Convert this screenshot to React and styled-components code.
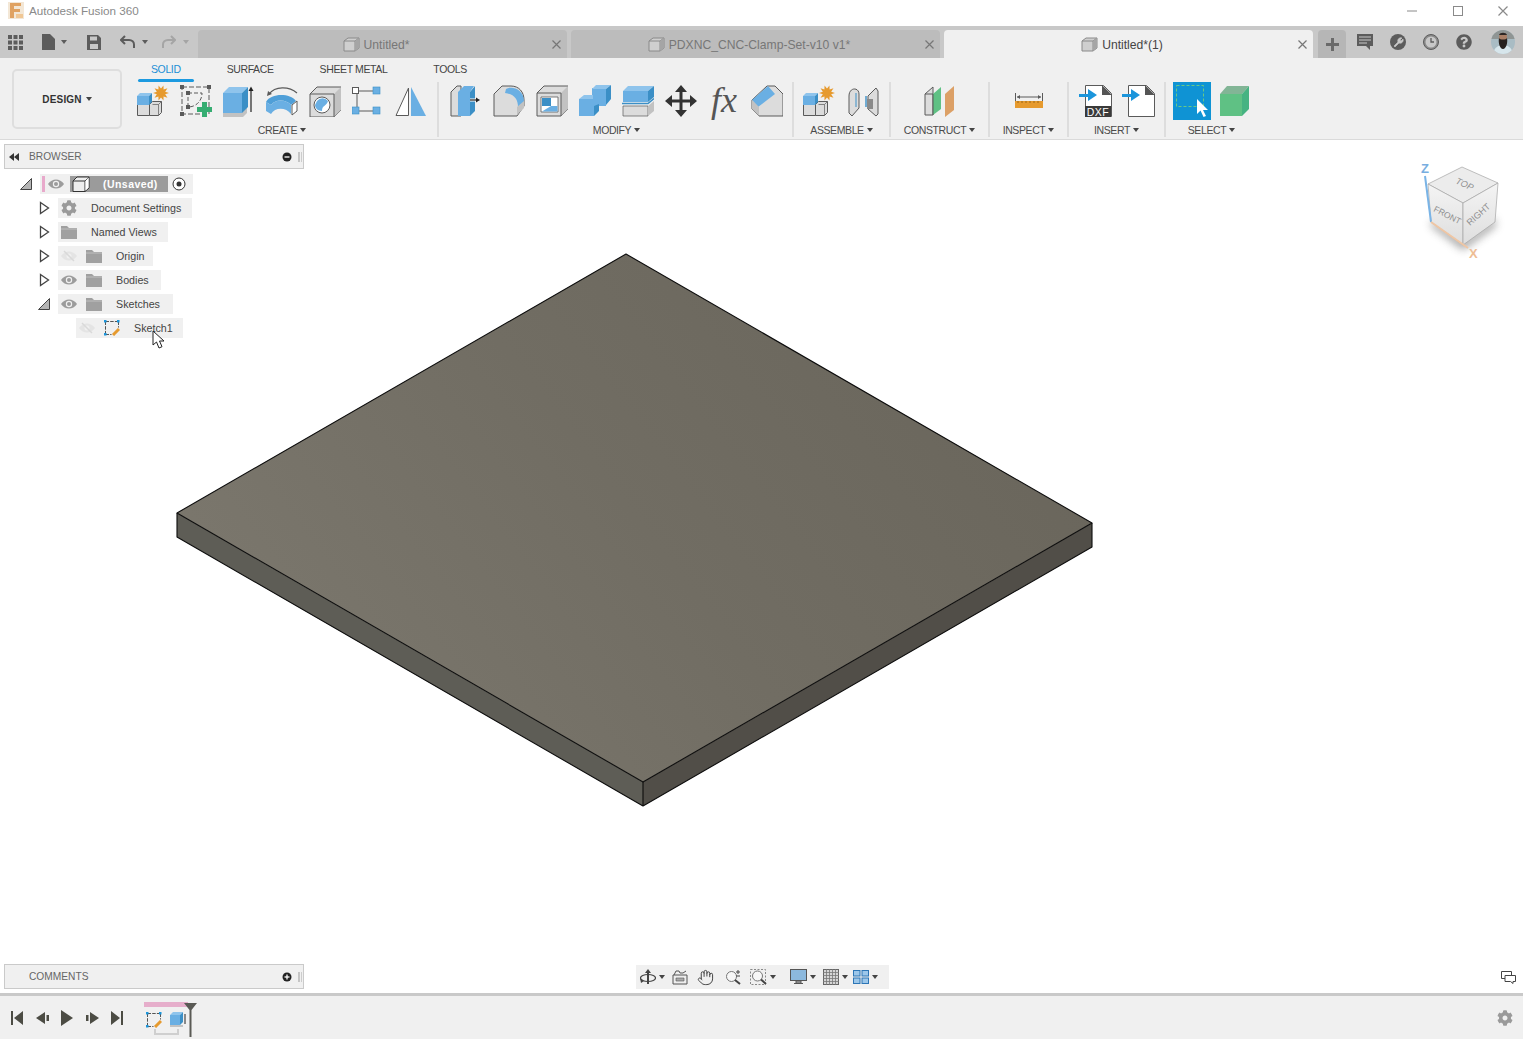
import React from "react";
import styled, { createGlobalStyle } from "styled-components";
import { FaCog, FaQuestionCircle } from "react-icons/fa";
import { Hand } from "lucide-react";

const GlobalStyle = createGlobalStyle`
    html, body { margin: 0; padding: 0; height: 100%; background: #fff; overflow: hidden; }
    body { font-family: "Liberation Sans", Arial, sans-serif; }
    #root { height: 100%; }
    svg { display: block; flex-shrink: 0; }
`;

const BLUE = "#6aafe3";
const DEEP = "#3b8fc6";
const PALE = "#dcdcdc";
const MID = "#c2c2c2";
const LINE = "#5a5a5a";
const ORANGE = "#e69a2e";
const GREEN = "#5fc184";

const Page = styled.div`
    height: 1039px;
    width: 1523px;
    display: flex;
    flex-direction: column;
`;

/* title bar */
const TitleBar = styled.div`
    height: 26px;
    display: flex;
    align-items: center;
    padding: 0 15px 5px 8px;
    background: #fff;
    color: #8a8a8a;
    font-size: 11.7px;
    box-sizing: border-box;
`;
const TitleText = styled.span`
    margin-left: 5px;
    flex: 1;
`;
const WinButton = styled.div`
    width: 10px;
    height: 20px;
    margin-left: 35.5px;
    display: flex;
    align-items: center;
    justify-content: center;
`;

/* document bar */
const DocBar = styled.div`
    height: 32px;
    background: #c8c8c8;
    display: flex;
    align-items: flex-end;
`;
const QuickTools = styled.div`
    width: 198px;
    height: 32px;
    display: flex;
    align-items: center;
    padding-left: 8px;
    box-sizing: border-box;
`;
const QuickGap = styled.div`
    width: 19px;
`;
const Tab = styled.div`
    width: 369px;
    height: 28px;
    margin-right: 4px;
    padding: 1px 13px 0 0;
    box-sizing: border-box;
    border-radius: 4px 4px 0 0;
    background: ${(p) => (p.$active ? "#f0f0f0" : "#bcbcbc")};
    color: ${(p) => (p.$active ? "#444" : "#777")};
    font-size: 12.15px;
    display: flex;
    align-items: center;
    justify-content: center;
    gap: 4px;
    position: relative;
`;
const TabClose = styled.div`
    position: absolute;
    right: 6px;
    top: 10px;
`;
const AddTab = styled.div`
    width: 28px;
    height: 28px;
    margin-left: 1px;
    background: #b6b6b6;
    border-radius: 4px 4px 0 0;
    display: flex;
    align-items: center;
    justify-content: center;
`;
const RightTools = styled.div`
    height: 32px;
    display: flex;
    align-items: center;
    gap: 17px;
    margin-left: 11px;
`;
const Avatar = styled.div`
    margin-left: 2px;
`;

/* ribbon */
const Ribbon = styled.div`
    height: 82px;
    background: #f0f0f0;
    border-bottom: 1px solid #dadada;
    box-sizing: border-box;
    display: flex;
    align-items: flex-start;
    padding-left: 12px;
`;
const DesignButton = styled.div`
    width: 110px;
    height: 60px;
    margin-top: 11px;
    margin-right: 15px;
    box-sizing: border-box;
    border: 2px solid #dedede;
    border-radius: 5px;
    display: flex;
    align-items: center;
    justify-content: center;
    gap: 4px;
    font-size: 10px;
    font-weight: bold;
    color: #333;
    letter-spacing: 0.2px;
`;
const RibbonBody = styled.div`
    display: flex;
    flex-direction: column;
`;
const TabRow = styled.div`
    height: 24px;
    display: flex;
    margin-left: -9px;
`;
const RibbonTab = styled.div`
    padding: 0 23px;
    height: 24px;
    line-height: 22px;
    font-size: 10.5px;
    letter-spacing: -0.38px;
    color: ${(p) => (p.$active ? "#1c8fd6" : "#444")};
    position: relative;
    &::after {
        content: "";
        display: ${(p) => (p.$active ? "block" : "none")};
        position: absolute;
        left: 10px;
        right: 10px;
        bottom: 0;
        height: 3px;
        border-radius: 2px;
        background: #1c9ae0;
    }
`;
const Groups = styled.div`
    display: flex;
    height: 55px;
`;
const Group = styled.div`
    display: flex;
    flex-direction: column;
    align-items: center;
    box-sizing: border-box;
    width: ${(p) => (p.$w ? `${p.$w}px` : "auto")};
    padding: 0 ${(p) => p.$right ?? 0}px 0 ${(p) => p.$left ?? 0}px;
    border-right: ${(p) => (p.$last ? "none" : "2px solid #dddddd")};
`;
const ToolRow = styled.div`
    height: 38px;
    display: flex;
    align-items: center;
    gap: ${(p) => p.$gap ?? 11}px;
`;
const GroupLabel = styled.div`
    margin-top: 4px;
    font-size: 10.5px;
    letter-spacing: -0.4px;
    color: #4a4a4a;
    white-space: nowrap;
    display: flex;
    align-items: center;
    gap: 3px;
`;
const Caret = styled.span`
    display: inline-block;
    width: 0;
    height: 0;
    margin-left: ${(p) => p.$gap ?? 0}px;
    margin-right: ${(p) => p.$after ?? 0}px;
    border-left: 3px solid transparent;
    border-right: 3px solid transparent;
    border-top: 4px solid ${(p) => p.$color ?? "#444"};
`;
const FxGlyph = styled.span`
    display: block;
    width: 32px;
    height: 32px;
    line-height: 30px;
    text-align: center;
    font-family: "Liberation Serif", serif;
    font-style: italic;
    font-size: 36px;
    color: #555;
`;

/* viewport */
const Viewport = styled.div`
    flex: 1;
    position: relative;
    background: #fff;
    overflow: hidden;
`;
const Canvas = styled.svg`
    position: absolute;
    inset: 0;
`;
const Cube = styled.svg`
    position: absolute;
    right: 8px;
    top: 18px;
`;
const PanelHead = styled.div`
    width: 300px;
    height: 25px;
    box-sizing: border-box;
    border: 1px solid #cacaca;
    background: #f0f0f0;
    display: flex;
    align-items: center;
    font-size: 10.2px;
    color: #666;
    padding: 0 0 0 ${(p) => p.$pad ?? 4}px;
`;
const HeadTitle = styled.span`
    flex: 1;
    margin-left: ${(p) => p.$gap ?? 0}px;
`;
const HeadGap = styled.div`
    width: 6px;
`;
const Browser = styled.div`
    position: absolute;
    left: 4px;
    top: 4px;
`;
const Comments = styled.div`
    position: absolute;
    left: 4px;
    bottom: 4px;
`;
const Tree = styled.div`
    margin-top: 3px;
    display: flex;
    flex-direction: column;
`;
const Row = styled.div`
    height: 24px;
    display: flex;
    align-items: center;
    padding-left: ${(p) => p.$indent}px;
`;
const Toggle = styled.div`
    width: 18px;
    margin-right: 5px;
    display: flex;
    align-items: center;
    justify-content: center;
`;
const Chip = styled.div`
    height: 20px;
    background: #f0f0f0;
    display: flex;
    align-items: center;
    padding: 0 ${(p) => p.$pr ?? 11}px 0 3px;
    font-size: 10.7px;
    color: #444;
    gap: 9px;
    position: relative;
    white-space: nowrap;
`;
const RootChip = styled(Chip)`
    margin-left: 8px;
    padding: 0 7px 0 2px;
    gap: 0;
`;
const Label = styled.span`
    margin-left: 5px;
`;
const RootBox = styled.div`
    width: 98px;
    height: 16px;
    margin: 0 4px 0 6px;
    background: #9b9b9b;
    color: #fff;
    font-weight: bold;
    font-size: 10.5px;
    letter-spacing: 0.45px;
    display: flex;
    align-items: center;
    gap: 13px;
    padding-left: 2px;
    box-sizing: border-box;
`;
const PinkBar = styled.div`
    width: 3px;
    height: 16px;
    background: #e8a9cb;
    margin-right: 3px;
`;
const Pointer = styled.svg`
    position: absolute;
    left: 76px;
    top: 12px;
`;
const NavBar = styled.div`
    position: absolute;
    left: 636px;
    bottom: 4px;
    width: 253px;
    height: 24px;
    background: #f0f0f0;
    display: flex;
    align-items: center;
    padding-left: 4px;
    box-sizing: border-box;
`;
const NavItem = styled.div`
    display: flex;
    align-items: center;
    gap: 3px;
    margin-right: ${(p) => p.$gap ?? 7}px;
`;
const ChatIcon = styled.div`
    position: absolute;
    right: 7px;
    bottom: 9px;
`;

/* timeline */
const Timeline = styled.div`
    height: 46px;
    box-sizing: border-box;
    border-top: 3px solid #c9c9c9;
    background: #f0f0f0;
    display: flex;
    align-items: center;
    padding: 0 10px 0 11px;
`;
const Transport = styled.div`
    display: flex;
    align-items: center;
    gap: 12.5px;
`;
const Features = styled.div`
    margin-left: 21px;
    width: 54px;
    height: 43px;
    position: relative;
    display: flex;
    align-items: center;
    gap: 8px;
    padding: 4px 0 0 2px;
    box-sizing: border-box;
    align-self: flex-start;
    &::before {
        content: "";
        position: absolute;
        left: 0;
        top: 6px;
        width: 44px;
        height: 5px;
        background: #e6aecb;
    }
`;
const Marker = styled.svg`
    position: absolute;
    left: 40px;
    top: 7px;
`;
const Bracket = styled.div`
    position: absolute;
    left: 10px;
    top: 33px;
    width: 25px;
    height: 6px;
    box-sizing: border-box;
    border: 2px solid #cfcfcf;
    border-top: none;
`;
const Spacer = styled.div`
    flex: 1;
`;

/* generic drawing wrapper */
const Ico = ({ w = 32, h = 32, children }) => (
    <svg width={w} height={h} viewBox={`0 0 ${w} ${h}`}>{children}</svg>
);

const Star = ({ x, y, r = 8 }) => {
    const pts = [];
    for (let i = 0; i < 20; i++) {
        const a = (i * Math.PI) / 10;
        const q = i % 2 ? r * 0.55 : r;
        pts.push(`${x + q * Math.cos(a)},${y + q * Math.sin(a)}`);
    }
    return <polygon points={pts.join(" ")} fill={ORANGE} />;
};

const NewComponent = () => (
    <Ico>
        <path d="M.5 19.500h12v11H.5z" fill={PALE} stroke={LINE} />
        <path d="M12.500 19.500l3-3h9v11l-3 3h-9z" fill={PALE} stroke={LINE} />
        <path d="M15.500 19.500h6v11M21.500 19.500l3-3" fill="none" stroke={LINE} strokeWidth=".7" />
        <path d="M0 11h12v9H0z" fill={BLUE} />
        <path d="M0 11l3-3h12l-3 3z" fill="#8fc4ec" />
        <path d="M12 11l3-3v9l-3 3z" fill={DEEP} />
        <Star x={24} y={8} />
    </Ico>
);
const NewSketch = () => (
    <Ico>
        <path d="M2 2h27v27H2z" fill="none" stroke={LINE} strokeDasharray="5 2" />
        <path d="M8 8h14c0 8-6 14-14 14z" fill="none" stroke={LINE} strokeDasharray="4 2" />
        <rect x="0" y="0" width="4" height="4" fill={LINE} />
        <rect x="27" y="0" width="4" height="4" fill={LINE} />
        <rect x="0" y="27" width="4" height="4" fill={LINE} />
        <rect x="6" y="6" width="4" height="4" fill={LINE} />
        <rect x="6" y="20" width="4" height="4" fill={LINE} />
        <path d="M22 18h5v5h5v5h-5v5h-5v-5h-5v-5h5z" fill="#36ad72" transform="translate(0 -1)" />
    </Ico>
);
const Extrude = () => (
    <Ico>
        <path d="M0 27l4-4h20v5l-4 4H0z" fill={MID} />
        <path d="M0 8h19v20H0z" fill={BLUE} />
        <path d="M0 8l6-6h19l-6 6z" fill="#8fc4ec" />
        <path d="M19 8l6-6v20l-6 6z" fill={DEEP} />
        <path d="M28 27V4" stroke="#222" strokeWidth="1.2" />
        <path d="M25.500 6L28 1.500 30.500 6z" fill="#222" />
    </Ico>
);
const Sweep = () => (
    <Ico>
        <path d="M3 9C9 1 23 1 31 8" fill="none" stroke={LINE} strokeWidth="1.2" />
        <path d="M1 11l1-5 4 3z" fill={LINE} />
        <path d="M0 17C5 8 24 8 30 16l-5 4C20 14 9 14 5 20z" fill="#4f9fd8" />
        <path d="M0 17l5 3C9 14 20 14 25 20v9C20 22 9 22 5 29l-5-3z" fill={BLUE} />
        <path d="M26 20l5-4v10l-5 4z" fill="#fff" stroke={LINE} />
    </Ico>
);
const Hole = () => (
    <Ico>
        <path d="M1 9l7-7h24v23l-7 7H1z" fill={PALE} stroke={LINE} />
        <path d="M25 32V9l7-7v23z" fill={MID} />
        <path d="M1 9h24v23" fill="none" stroke={LINE} />
        <circle cx="13" cy="20" r="8" fill="#fff" stroke={LINE} />
        <path d="M8 16a7 7 0 0 1 11 0c-1 5-6 4-6 10-4 0-7-3-7-6z" fill={BLUE} />
    </Ico>
);
const Pattern = () => (
    <Ico>
        <path d="M5 6h18M5 6v20M5 26h18" stroke={LINE} fill="none" />
        <rect x=".5" y="2.500" width="6" height="6" fill="#fff" stroke={LINE} />
        <rect x="21" y="2" width="7" height="7" fill={BLUE} stroke={DEEP} strokeWidth=".6" />
        <rect x="0" y="22" width="7" height="7" fill={BLUE} stroke={DEEP} strokeWidth=".6" />
        <rect x="21" y="22" width="7" height="7" fill={BLUE} stroke={DEEP} strokeWidth=".6" />
    </Ico>
);
const Mirror = () => (
    <Ico>
        <path d="M13.500 3L1 30.500h12.500z" fill="#fff" stroke={LINE} />
        <path d="M16 2l15 29H16z" fill={BLUE} />
    </Ico>
);
const PressPull = () => (
    <Ico>
        <path d="M1 31V7l6-6h4v30z" fill={PALE} stroke={LINE} />
        <path d="M8 7h12v24H8z" fill={BLUE} />
        <path d="M8 7l6-6h10l-4 6z" fill={BLUE} />
        <path d="M20 7l5-6v25l-5 5z" fill={DEEP} />
        <path d="M20 15h9" stroke="#fff" strokeWidth="3" />
        <path d="M20 15h8" stroke="#222" strokeWidth="1.2" />
        <path d="M26 12.500l4 2.500-4 2.500z" fill="#222" />
    </Ico>
);
const Fillet = () => (
    <Ico>
        <path d="M1 31V9l8-8h9c8 0 13 6 13 14v6l-7 10z" fill={PALE} stroke={LINE} />
        <path d="M13 4c5-3 18-1 18 13l-6 5C25 14 21 9 12 8z" fill={BLUE} />
        <path d="M24 22l7-6v7l-7 7z" fill={MID} />
    </Ico>
);
const Shell = () => (
    <Ico>
        <path d="M1 8l7-7h24v23l-7 7H1z" fill={PALE} stroke={LINE} />
        <path d="M25 31V8l7-7v23z" fill={MID} />
        <path d="M1 8h24v23" fill="none" stroke={LINE} />
        <path d="M5 12h17v15H5z" fill="#fff" stroke={LINE} strokeWidth=".8" />
        <path d="M6 13h9v8H6z" fill={DEEP} />
        <path d="M6 26.500l9-5.500h6.500v5.500z" fill={BLUE} />
    </Ico>
);
const Combine = () => (
    <Ico>
        <path d="M0 14h13V3h14v18H15v10H0z" fill={BLUE} />
        <path d="M13 4l4-4h15l-5 4zM0 14l5-4h9v4z" fill="#8fc4ec" />
        <path d="M27 4l5-4v14l-5 6zM15 21l5-2v7l-5 5z" fill={DEEP} />
    </Ico>
);
const Split = () => (
    <Ico>
        <path d="M1 6h25v11H1z" fill={BLUE} />
        <path d="M1 6l5-5h26l-6 5z" fill="#8fc4ec" />
        <path d="M26 6l6-5v11l-6 5z" fill={DEEP} />
        <path d="M0 18.500h26l6-5" stroke={DEEP} strokeWidth="1.6" fill="none" />
        <path d="M1 21h25v10H1z" fill={PALE} stroke={LINE} strokeWidth=".7" />
        <path d="M26 21l6-5v10l-6 5z" fill={MID} />
    </Ico>
);
const MoveIcon = () => (
    <Ico>
        <path d="M16 0l6 7h-4.500v7.500H25V10l7 6-7 6v-4.500h-7.500V25H22l-6 7-6-7h4.500v-7.500H7V22l-7-6 7-6v4.500h7.500V7H10z" fill="#333" />
    </Ico>
);
const Fx = () => <FxGlyph>fx</FxGlyph>;
const Chamfer = () => (
    <Ico>
        <path d="M1 15L16 1h8l8 8v22H8l-7-7z" fill={PALE} stroke={LINE} />
        <path d="M1 15L17 1l7 8L7 22z" fill={BLUE} />
        <path d="M8 31l-7-7V15l7 7z" fill={MID} />
    </Ico>
);
const Joint = () => (
    <Ico>
        <path d="M1 11C1 2 11 2 11 9v14L4 31l-3-3z" fill={PALE} stroke={LINE} />
        <path d="M20 11l8-8 2 3v23l-2 2-8-7z" fill={PALE} stroke={LINE} />
        <path d="M8 8v14" stroke={DEEP} strokeWidth="1" />
        <path d="M18 11v11" stroke={DEEP} strokeWidth="1.400" />
        <path d="M19 14h6v10h-6z" fill="#8a8a8a" />
    </Ico>
);
const Plane = () => (
    <Ico>
        <path d="M1 9l8-7v28H1z" fill={PALE} stroke={LINE} />
        <path d="M9 9l8-7v22l-8 6z" fill={GREEN} />
        <path d="M1 9h8V30" fill="none" stroke={LINE} />
        <path d="M21 9l9-8v24l-9 7z" fill="#dca066" />
    </Ico>
);
const Measure = () => (
    <Ico w={28}>
        <path d="M.5 8v8M27.500 8v8" stroke={LINE} />
        <path d="M2 12h24" stroke={LINE} />
        <path d="M5 10l-3 2 3 2zM23 10l3 2-3 2z" fill={LINE} />
        <rect x="0" y="16" width="28" height="7" fill={ORANGE} />
        <path d="M3 16v2M7 16v2M11 16v2M15 16v2M19 16v2M23 16v2" stroke="#8a5a10" strokeWidth=".8" />
    </Ico>
);
const DocShape = ({ x = 6 }) => (
    <g transform={`translate(${x} 0)`}>
        <path d="M.5.5h18l8 8v23H.5z" fill="#fff" stroke={LINE} />
        <path d="M17 0l10 10H17z" fill="#555" />
    </g>
);
const ArrowIn = () => <path d="M0 9h9V4l9 6-9 6v-4H0z" fill="#1b95db" />;
const InsertDxf = () => (
    <Ico w={33}>
        <DocShape />
        <ArrowIn />
        <rect x="6" y="21" width="26" height="11" fill="#3a3a3a" />
        <text x="19" y="30.500" textAnchor="middle" fontFamily="'Liberation Sans', sans-serif" fontSize="10.500" fill="#fff" letterSpacing=".5">DXF</text>
    </Ico>
);
const InsertPlain = () => (
    <Ico w={33}>
        <DocShape />
        <ArrowIn />
    </Ico>
);
const SelectBox = () => (
    <Ico w={38} h={38}>
        <rect width="38" height="38" fill="#0f93d4" />
        <rect x="3.500" y="3.500" width="27" height="21" fill="none" stroke="#69c884" strokeDasharray="3 2" />
        <path d="M24 17v15l3.500-3.500 3 6.500 2.500-1-3-6h5z" fill="#fff" />
    </Ico>
);
const GreenBox = () => (
    <Ico w={30}>
        <path d="M0 9h22v22H0z" fill={GREEN} />
        <path d="M0 9l7-8h22l-7 8z" fill="#82b596" />
        <path d="M22 9l7-8v23l-7 7z" fill="#46b382" />
    </Ico>
);

const Eye = ({ off }) => (
    <Ico w={16} h={12}>
        {off ? (
            <g opacity=".55">
                <path d="M0 6c4-6 12-6 16 0-4 6-12 6-16 0z" fill="#dcdcdc" />
                <circle cx="8" cy="6" r="2.500" fill="#f0f0f0" />
                <path d="M3 1l10 10" stroke="#c8c8c8" strokeWidth="1.500" />
            </g>
        ) : (
            <g>
                <path d="M0 6c4-6 12-6 16 0-4 6-12 6-16 0z" fill="#9c9c9c" />
                <circle cx="8" cy="6" r="3.200" fill="#f0f0f0" />
                <circle cx="8" cy="6" r="2" fill="#9c9c9c" />
            </g>
        )}
    </Ico>
);
const Folder = () => (
    <Ico w={16} h={13}>
        <path d="M0 0h6l2 2h8v11H0z" fill="#a0a0a0" />
        <path d="M0 3h16" stroke="#c8c8c8" strokeWidth=".8" />
    </Ico>
);
const SketchGlyph = () => (
    <Ico w={16} h={16}>
        <path d="M1.500 1.500h13M1.500 1.500v13M14.500 1.500v6M1.500 14.500h6" fill="none" stroke="#555" strokeDasharray="3.500 1.200" />
        <rect x="0" y="0" width="2.500" height="2.500" fill="#1b95db" />
        <rect x="13" y="0" width="2.500" height="2.500" fill="#1b95db" />
        <rect x="0" y="13" width="2.500" height="2.500" fill="#1b95db" />
        <path d="M9 15l6-6" stroke={ORANGE} strokeWidth="3" />
    </Ico>
);
const TriOpen = () => (
    <Ico w={11} h={14}>
        <path d="M1.500 1.500l8 5.500-8 5.500z" fill="#fff" stroke="#444" strokeWidth="1.300" />
    </Ico>
);
const TriDown = () => (
    <Ico w={12} h={12}>
        <path d="M.5 11.500L11.500.5v11z" fill="#b5b5b5" stroke="#444" />
    </Ico>
);
const SmallCube = () => (
    <Ico w={17} h={15}>
        <path d="M1 4l4-3h11v10l-4 3H1z" fill="#cfcfcf" stroke="#8a8a8a" />
        <path d="M1 4h11v10M12 4l4-3" fill="none" stroke="#8a8a8a" />
        <path d="M12 4l4-3v10l-4 3z" fill="#a5a5a5" />
    </Ico>
);
const RootCube = () => (
    <Ico w={18} h={16}>
        <path d="M1 5l4-4h12v11l-4 3.500H1z" fill="#eeeeee" stroke="#333" />
        <path d="M1 5h12v10.500M13 5l4-4" fill="none" stroke="#333" />
        <path d="M13.500 5l3-3.500v10l-3 3z" fill="#fff" />
    </Ico>
);
const CircleBtn = ({ plus }) => (
    <Ico w={10} h={10}>
        <circle cx="5" cy="5" r="4.500" fill="#222" />
        <path d="M2.500 5h5" stroke="#fff" strokeWidth="1.300" />
        {plus && <path d="M5 2.500v5" stroke="#fff" strokeWidth="1.300" />}
    </Ico>
);
const PanelPin = () => (
    <Ico w={5} h={12}>
        <path d="M1 1v10" stroke="#999" />
        <path d="M3.500 1v10" stroke="#ccc" />
    </Ico>
);
const XMark = ({ color = "#777", s = 9 }) => (
    <Ico w={s} h={s}>
        <path d={`M.5.5L${s - 0.5} ${s - 0.5}M${s - 0.5} .5L.5 ${s - 0.5}`} stroke={color} strokeWidth="1.200" />
    </Ico>
);

const tools = {
    create: [NewComponent, NewSketch, Extrude, Sweep, Hole, Pattern, Mirror],
    modify: [PressPull, Fillet, Shell, Combine, Split, MoveIcon, Fx, Chamfer],
    assemble: [NewComponent, Joint],
};

const treeRows = [
    { name: "Document Settings", icons: "gear", open: false, pr: 11 },
    { name: "Named Views", icons: "folder", open: false, pr: 11 },
    { name: "Origin", icons: "off", open: false, pr: 8 },
    { name: "Bodies", icons: "on", open: false, pr: 12 },
    { name: "Sketches", icons: "on", open: true, pr: 13 },
];

const RowIcons = ({ kind }) => {
    if (kind === "gear") return <FaCog size={16} color="#9a9a9a" />;
    if (kind === "folder") return <Folder />;
    return (
        <>
            <Eye off={kind === "off"} />
            <Folder />
        </>
    );
};

const ViewCube = () => (
    <Cube width="100" height="110" viewBox="1415 158 100 110">
        <defs>
            <filter id="cubeShadow" x="-30%" y="-30%" width="160%" height="160%">
                <feGaussianBlur stdDeviation="4" />
            </filter>
            <linearGradient id="cubeFront" x1="0" y1="0" x2="0" y2="1">
                <stop offset="0" stopColor="#f4f4f4" />
                <stop offset="1" stopColor="#dedede" />
            </linearGradient>
        </defs>
        <path d="M1431 226l32 24 33-24-1-8-31 22-32-20z" fill="#666" opacity=".6" filter="url(#cubeShadow)" />
        <path d="M1462 167l36 16-35 20-35-19z" fill="#ececec" stroke="#a5a5a5" strokeWidth=".7" />
        <path d="M1428 184l35 19v42l-32-23z" fill="url(#cubeFront)" stroke="#a5a5a5" strokeWidth=".7" />
        <path d="M1463 203l35-20-3 39-32 23z" fill="url(#cubeFront)" stroke="#a5a5a5" strokeWidth=".7" />
        <text transform="translate(1455 183) rotate(25)" fontFamily="'Liberation Sans', sans-serif" fontStyle="italic" fontSize="9" fill="#8f8f8f">TOP</text>
        <text transform="translate(1433 211) rotate(27)" fontFamily="'Liberation Sans', sans-serif" fontSize="8.500" fill="#8f8f8f">FRONT</text>
        <text transform="translate(1470 226) rotate(-42)" fontFamily="'Liberation Sans', sans-serif" fontSize="9" fill="#8f8f8f">RIGHT</text>
        <path d="M1425 176l6 46" stroke="#7ab4e6" strokeWidth="2" />
        <path d="M1431 222l37 26" stroke="#efc6a4" strokeWidth="2" />
        <text x="1421" y="173" fontFamily="'Liberation Sans', sans-serif" fontWeight="bold" fontSize="13" fill="#78aee0">Z</text>
        <text x="1469" y="258" fontFamily="'Liberation Sans', sans-serif" fontWeight="bold" fontSize="13" fill="#eebd94">X</text>
    </Cube>
);

const Model = () => (
    <Canvas width="1523" height="853" viewBox="0 140 1523 853">
        <defs>
            <linearGradient id="plateTop" x1="0.05" y1="0.7" x2="0.95" y2="0.3">
                <stop offset="0" stopColor="#7b776d" />
                <stop offset="0.5" stopColor="#716d63" />
                <stop offset="1" stopColor="#6a665c" />
            </linearGradient>
        </defs>
        <polygon points="177,513 643,782 643,806 177,537" fill="#5e5d56" />
        <polygon points="643,782 1092,523 1092,547 643,806" fill="#514e48" />
        <polygon points="626,254 1092,523 643,782 177,513" fill="url(#plateTop)" />
        <g fill="none" stroke="#0c0c0c" strokeWidth="1.100" strokeLinejoin="round">
            <polygon points="626,254 1092,523 643,782 177,513" />
            <polyline points="177,513 177,537 643,806 1092,547 1092,523" />
            <line x1="643" y1="782" x2="643" y2="806" />
        </g>
    </Canvas>
);

const App = () => {
    return (
        <Page>
            <GlobalStyle />
            <TitleBar>
                <Ico w={16} h={17}>
                    <rect width="16" height="17" fill="#f3e7d6" />
                    <path d="M2 1h11v3H6v3h6v3H6v6H2z" fill="#e0a262" />
                    <path d="M8 12h7v4H8z" fill="#f0c795" />
                </Ico>
                <TitleText>Autodesk Fusion 360</TitleText>
                <WinButton>
                    <Ico w={10} h={2}><path d="M0 1h10" stroke="#8a8a8a" /></Ico>
                </WinButton>
                <WinButton>
                    <Ico w={10} h={10}><rect x=".5" y=".5" width="9" height="9" fill="none" stroke="#8a8a8a" /></Ico>
                </WinButton>
                <WinButton>
                    <XMark color="#8a8a8a" s={10} />
                </WinButton>
            </TitleBar>

            <DocBar>
                <QuickTools>
                    <Ico w={15} h={15}>
                        <path d="M0 0h4v4H0zM5.500 0h4v4h-4zM11 0h4v4h-4zM0 5.500h4v4H0zM5.500 5.500h4v4h-4zM11 5.500h4v4h-4zM0 11h4v4H0zM5.500 11h4v4h-4zM11 11h4v4h-4z" fill="#5c5c5c" />
                    </Ico>
                    <QuickGap />
                    <Ico w={13} h={16}>
                        <path d="M0 0h8l5 5v11H0z" fill="#5c5c5c" />
                    </Ico>
                    <Caret $gap={6} $after={20} $color="#5c5c5c" />
                    <Ico w={14} h={15}>
                        <path d="M0 0h11l3 3v12H0z" fill="#5c5c5c" />
                        <path d="M3 1.500h7v4H3zM3 9h8v5H3z" fill="#c8c8c8" />
                    </Ico>
                    <QuickGap />
                    <Ico w={15} h={14}>
                        <path d="M5 1L1 5l4 4M1 5h8c3 0 5 2 5 4.500V13" fill="none" stroke="#5c5c5c" strokeWidth="2" />
                    </Ico>
                    <Caret $gap={7} $after={14} $color="#5c5c5c" />
                    <Ico w={14} h={14}>
                        <path d="M9 1l4 4-4 4M13 5H6C3 5 1 7 1 9.500V13" fill="none" stroke="#a5a5a5" strokeWidth="2" />
                    </Ico>
                    <Caret $gap={7} $color="#a5a5a5" />
                </QuickTools>
                <Tab>
                    <SmallCube />
                    Untitled*
                    <TabClose><XMark /></TabClose>
                </Tab>
                <Tab>
                    <SmallCube />
                    PDXNC_CNC-Clamp-Set-v10 v1*
                    <TabClose><XMark /></TabClose>
                </Tab>
                <Tab $active>
                    <SmallCube />
                    Untitled*(1)
                    <TabClose><XMark /></TabClose>
                </Tab>
                <AddTab>
                    <Ico w={13} h={13}><path d="M6.500 0v13M0 6.500h13" stroke="#6a6a6a" strokeWidth="3" /></Ico>
                </AddTab>
                <RightTools>
                    <Ico w={16} h={16}>
                        <path d="M0 0h16v12h-3v4l-4-4H0z" fill="#5c5c5c" />
                        <path d="M2 3h12M2 6h12M2 9h8" stroke="#c8c8c8" />
                    </Ico>
                    <Ico w={16} h={16}>
                        <circle cx="8" cy="8" r="8" fill="#5c5c5c" />
                        <path d="M4 12l4-4c-1-2 1-5 4-4l-2 2 1 1 2-2c1 3-2 5-4 4l-4 4z" fill="#c8c8c8" stroke="#c8c8c8" strokeWidth=".6" />
                    </Ico>
                    <Ico w={16} h={16}>
                        <circle cx="8" cy="8" r="7.500" fill="#8a8a8a" stroke="#5c5c5c" />
                        <circle cx="8" cy="8" r="5.500" fill="#c8c8c8" />
                        <path d="M8 4v4h3" fill="none" stroke="#5c5c5c" strokeWidth="1.300" />
                    </Ico>
                    <FaQuestionCircle size={16} color="#5c5c5c" />
                    <Avatar>
                        <Ico w={24} h={24}>
                            <defs>
                                <clipPath id="avatarClip"><circle cx="12" cy="12" r="12" /></clipPath>
                            </defs>
                            <g clipPath="url(#avatarClip)">
                                <rect width="24" height="24" fill="#a9bcc4" />
                                <path d="M0 0h24v9H0z" fill="#8f9594" />
                                <path d="M2 24c1-7 6-9 10-9s9 2 10 9z" fill="#d7e6ec" />
                                <circle cx="12" cy="7" r="4" fill="#a97f66" />
                                <path d="M8 8c1 2 7 2 8 0 1 5-1 11-4 11S7 13 8 8z" fill="#27211e" />
                                <path d="M8 5c1-3 7-3 8 0z" fill="#2c2725" />
                            </g>
                        </Ico>
                    </Avatar>
                </RightTools>
            </DocBar>

            <Ribbon>
                <DesignButton>
                    DESIGN
                    <Caret />
                </DesignButton>
                <RibbonBody>
                    <TabRow>
                        <RibbonTab $active>SOLID</RibbonTab>
                        <RibbonTab>SURFACE</RibbonTab>
                        <RibbonTab>SHEET METAL</RibbonTab>
                        <RibbonTab>TOOLS</RibbonTab>
                    </TabRow>
                    <Groups>
                        <Group $left={0} $right={10}>
                            <ToolRow>
                                {tools.create.map((Tool, i) => <Tool key={i} />)}
                            </ToolRow>
                            <GroupLabel>CREATE<Caret /></GroupLabel>
                        </Group>
                        <Group $left={11} $right={9}>
                            <ToolRow>
                                {tools.modify.map((Tool, i) => <Tool key={i} />)}
                            </ToolRow>
                            <GroupLabel>MODIFY<Caret /></GroupLabel>
                        </Group>
                        <Group $w={97}>
                            <ToolRow $gap={13}>
                                {tools.assemble.map((Tool, i) => <Tool key={i} />)}
                            </ToolRow>
                            <GroupLabel>ASSEMBLE<Caret /></GroupLabel>
                        </Group>
                        <Group $w={99}>
                            <ToolRow><Plane /></ToolRow>
                            <GroupLabel>CONSTRUCT<Caret /></GroupLabel>
                        </Group>
                        <Group $w={79}>
                            <ToolRow><Measure /></ToolRow>
                            <GroupLabel>INSPECT<Caret /></GroupLabel>
                        </Group>
                        <Group $w={97}>
                            <ToolRow $gap={10}>
                                <InsertDxf />
                                <InsertPlain />
                            </ToolRow>
                            <GroupLabel>INSERT<Caret /></GroupLabel>
                        </Group>
                        <Group $left={7} $last>
                            <ToolRow $gap={9}>
                                <SelectBox />
                                <GreenBox />
                            </ToolRow>
                            <GroupLabel>SELECT<Caret /></GroupLabel>
                        </Group>
                    </Groups>
                </RibbonBody>
            </Ribbon>

            <Viewport>
                <Model />
                <ViewCube />

                <Browser>
                    <PanelHead>
                        <Ico w={10} h={8}>
                            <path d="M5 0v8L0 4zM10 0v8L5 4z" fill="#333" />
                        </Ico>
                        <HeadTitle $gap={10}>BROWSER</HeadTitle>
                        <CircleBtn />
                        <HeadGap />
                        <PanelPin />
                    </PanelHead>
                    <Tree>
                        <Row $indent={16}>
                            <TriDown />
                            <RootChip>
                                <PinkBar />
                                <Eye />
                                <RootBox>
                                    <RootCube />
                                    (Unsaved)
                                </RootBox>
                                <Ico w={14} h={14}>
                                    <circle cx="7" cy="7" r="6" fill="#fff" stroke="#333" />
                                    <circle cx="7" cy="7" r="2.500" fill="#333" />
                                </Ico>
                            </RootChip>
                        </Row>
                        {treeRows.map((row) => (
                            <Row $indent={31} key={row.name}>
                                <Toggle>{row.open ? <TriDown /> : <TriOpen />}</Toggle>
                                <Chip $pr={row.pr}>
                                    <RowIcons kind={row.icons} />
                                    <Label>{row.name}</Label>
                                </Chip>
                            </Row>
                        ))}
                        <Row $indent={72}>
                            <Chip $pr={10}>
                                <Eye off />
                                <SketchGlyph />
                                <Label>Sketch1</Label>
                                <Pointer width="13" height="19" viewBox="0 0 13 19">
                                    <path d="M1 1v14l3.500-3 2.500 6 3-1.300-2.500-5.700H12z" fill="#fff" stroke="#222" />
                                </Pointer>
                            </Chip>
                        </Row>
                    </Tree>
                </Browser>

                <Comments>
                    <PanelHead $pad={24}>
                        <HeadTitle>COMMENTS</HeadTitle>
                        <CircleBtn plus />
                        <HeadGap />
                        <PanelPin />
                    </PanelHead>
                </Comments>

                <NavBar>
                    <NavItem $gap={7}>
                        <Ico w={16} h={16}>
                            <path d="M8 0l3 4H9v11H7V4H5z" fill="#444" />
                            <ellipse cx="8" cy="9" rx="7.500" ry="3.500" fill="none" stroke="#444" strokeWidth="1.200" />
                            <path d="M0 9l4 3-3 2z" fill="#444" />
                        </Ico>
                        <Caret $color="#444" />
                    </NavItem>
                    <NavItem $gap={9}>
                        <Ico w={16} h={15}>
                            <path d="M1 5h14v9H1z" fill="#eee" stroke="#555" />
                            <path d="M4 8h8v3H4z" fill="#aaa" stroke="#555" strokeWidth=".6" />
                            <path d="M2 5l2-4h3l1 2h3l3-2" fill="none" stroke="#555" />
                        </Ico>
                    </NavItem>
                    <NavItem $gap={11}>
                        <Hand size={17} color="#444" strokeWidth={1.4} />
                    </NavItem>
                    <NavItem $gap={8}>
                        <Ico w={17} h={16}>
                            <circle cx="6.500" cy="7.500" r="5" fill="#f7f7f7" stroke="#777" />
                            <path d="M10 11l5 4" stroke="#444" strokeWidth="2" />
                            <path d="M13 1v4M11 3h4M11 7h4" stroke="#444" />
                        </Ico>
                    </NavItem>
                    <NavItem $gap={14}>
                        <Ico w={17} h={16}>
                            <rect x=".5" y=".5" width="15" height="15" fill="none" stroke="#888" strokeDasharray="2 1.500" />
                            <circle cx="7.500" cy="7" r="5" fill="#f7f7f7" stroke="#777" />
                            <path d="M11 10.500l5 4.500" stroke="#444" strokeWidth="2" />
                        </Ico>
                        <Caret $color="#444" />
                    </NavItem>
                    <NavItem $gap={7}>
                        <Ico w={17} h={16}>
                            <rect x=".5" y=".5" width="16" height="11" fill="#8cb9de" stroke="#555" />
                            <path d="M6 12h5v2H6zM4 14.500h9" stroke="#555" fill="#bbb" />
                        </Ico>
                        <Caret $color="#444" />
                    </NavItem>
                    <NavItem $gap={5}>
                        <Ico w={16} h={16}>
                            <rect x=".5" y=".5" width="15" height="15" fill="#d5d5d5" stroke="#666" />
                            <path d="M3.500 0v16M6.500 0v16M9.500 0v16M12.500 0v16M0 3.500h16M0 6.500h16M0 9.500h16M0 12.500h16" stroke="#777" strokeWidth=".8" />
                        </Ico>
                        <Caret $color="#444" />
                    </NavItem>
                    <NavItem>
                        <Ico w={16} h={14}>
                            <rect x=".5" y=".5" width="6.500" height="5.500" fill="#9cc7ea" stroke="#2d76b6" />
                            <rect x="9" y=".5" width="6.500" height="5.500" fill="#9cc7ea" stroke="#2d76b6" />
                            <rect x=".5" y="8" width="6.500" height="5.500" fill="#9cc7ea" stroke="#2d76b6" />
                            <rect x="9" y="8" width="6.500" height="5.500" fill="#9cc7ea" stroke="#2d76b6" />
                        </Ico>
                        <Caret $color="#444" />
                    </NavItem>
                </NavBar>

                <ChatIcon>
                    <Ico w={15} h={13}>
                        <path d="M.5.5h10v7h-10z" fill="#fff" stroke="#444" />
                        <path d="M4 4.500h10.500v6H12v2l-2.500-2H4z" fill="#fff" stroke="#444" />
                    </Ico>
                </ChatIcon>
            </Viewport>

            <Timeline>
                <Transport>
                    <Ico w={12} h={14}><path d="M0 0h2v14H0zM12 0v14L3 7z" fill="#4c4c44" /></Ico>
                    <Ico w={13} h={14}><path d="M9 1v12L0 7zM10.500 4H13v6h-2.500z" fill="#4c4c44" /></Ico>
                    <Ico w={12} h={16}><path d="M0 0l12 8-12 8z" fill="#4c4c44" /></Ico>
                    <Ico w={13} h={14}><path d="M4 1v12l9-6zM0 4h2.500v6H0z" fill="#4c4c44" /></Ico>
                    <Ico w={12} h={14}><path d="M0 0v14l9-7zM10 0h2v14h-2z" fill="#4c4c44" /></Ico>
                </Transport>
                <Features>
                    <SketchGlyph />
                    <Ico w={17} h={17}>
                        <path d="M0 14h13v2H0z" fill={MID} />
                        <path d="M0 4h10v10H0z" fill={BLUE} />
                        <path d="M0 4l3-3h10l-3 3z" fill="#8fc4ec" />
                        <path d="M10 4l3-3v10l-3 3z" fill={DEEP} />
                        <path d="M15 13V3" stroke="#222" />
                    </Ico>
                    <Bracket />
                    <Marker width="13" height="34" viewBox="0 0 13 34">
                        <path d="M0 0h13L7.500 7v27h-2V7z" fill="#5a5a55" />
                    </Marker>
                </Features>
                <Spacer />
                <FaCog size={16} color="#9a9a9a" />
            </Timeline>
        </Page>
    );
};

export default App;
